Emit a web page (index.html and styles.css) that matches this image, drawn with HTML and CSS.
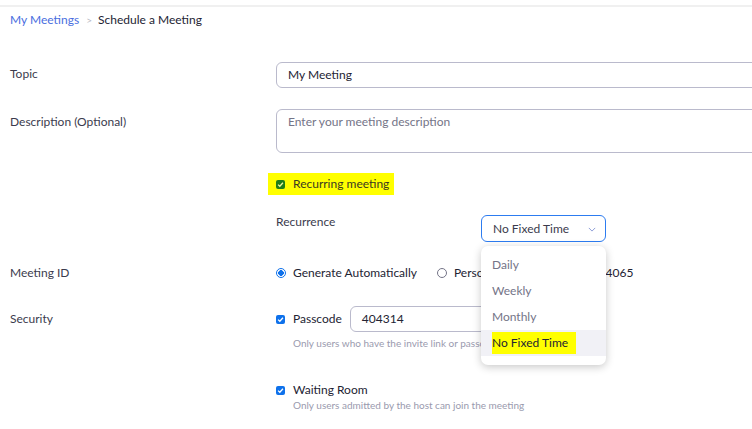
FILE: index.html
```html
<!DOCTYPE html>
<html lang="en">
<head>
    <meta charset="UTF-8">
    <meta name="viewport" content="width=device-width, initial-scale=1.0">
    <title>Schedule a Meeting</title>
    <link rel="stylesheet" href="styles.css">
</head>
<body>
    <div class="topline"></div>
    <div class="breadcrumb">
        <a href="#">My Meetings</a>
        <span class="sep">&gt;</span>
        <span>Schedule a Meeting</span>
    </div>

    <div class="form">
        <div class="row row-topic">
            <div class="label">Topic</div>
            <div class="field">
                <div class="input input-wide">My Meeting</div>
            </div>
        </div>

        <div class="row row-desc">
            <div class="label">Description (Optional)</div>
            <div class="field">
                <div class="input textarea placeholder">Enter your meeting description</div>
            </div>
        </div>

        <div class="row row-recurring">
            <div class="label"></div>
            <div class="field">
                <span class="highlight">
                    <span class="check check-marked">
                        <svg viewBox="0 0 10 10" width="7" height="7"><path d="M1.5 5.2 L4 7.5 L8.5 2.5" fill="none" stroke="#f4f7a0" stroke-width="1.8"/></svg>
                    </span>
                    Recurring meeting
                </span>
            </div>
        </div>

        <div class="row row-recurrence">
            <div class="label"></div>
            <div class="field recurrence">
                <span class="sub-label">Recurrence</span>
                <div class="select-wrap">
                    <div class="select">
                        <span>No Fixed Time</span>
                        <svg class="chevron" viewBox="0 0 10 6" width="8" height="5"><path d="M1 1 L5 5 L9 1" fill="none" stroke="#8a9bd6" stroke-width="1.2"/></svg>
                    </div>
                    <ul class="menu">
                        <li>Daily</li>
                        <li>Weekly</li>
                        <li>Monthly</li>
                        <li class="active"><span class="mark">No Fixed Time</span></li>
                    </ul>
                </div>
            </div>
        </div>

        <div class="row row-id">
            <div class="label">Meeting ID</div>
            <div class="field options">
                <span class="option"><span class="radio radio-on"></span>Generate Automatically</span>
                <span class="option"><span class="radio"></span>Personal Meeting ID 832 24 4065</span>
            </div>
        </div>

        <div class="row row-security">
            <div class="label">Security</div>
            <div class="field">
                <div class="passcode">
                    <span class="check">
                        <svg viewBox="0 0 10 10" width="7" height="7"><path d="M1.5 5.2 L4 7.5 L8.5 2.5" fill="none" stroke="#fff" stroke-width="1.8"/></svg>
                    </span>
                    <span class="opt-text">Passcode</span>
                    <div class="input input-code">404314</div>
                </div>
                <div class="hint">Only users who have the invite link or passcode can join the meeting</div>

                <div class="waiting">
                    <span class="check">
                        <svg viewBox="0 0 10 10" width="7" height="7"><path d="M1.5 5.2 L4 7.5 L8.5 2.5" fill="none" stroke="#fff" stroke-width="1.8"/></svg>
                    </span>
                    <span class="opt-text">Waiting Room</span>
                </div>
                <div class="hint hint-wait">Only users admitted by the host can join the meeting</div>
            </div>
        </div>
    </div>
</body>
</html>
```

FILE: styles.css
```css
body {
    font-family: Lato, "Open Sans", sans-serif;
    font-size: 12px;
    color: #232333;
    margin: 0;
    padding: 0;
    background-color: #fff;
    overflow: hidden;
}
.topline {
    height: 5px;
    border-bottom: 2px solid #f0f0f0;
}
.breadcrumb {
    padding: 3px 10px 0;
    line-height: 20px;
}
.breadcrumb a {
    color: #4a6ee0;
    text-decoration: none;
}
.breadcrumb .sep {
    color: #b8b8c4;
    font-size: 10px;
    margin: 0 3px 0 4px;
}
.form {
    padding-left: 10px;
}
.row {
    display: grid;
    grid-template-columns: 266px 1fr;
}
.label {
    color: #3b3b4d;
    line-height: 18px;
}
.input {
    box-sizing: border-box;
    height: 26px;
    line-height: 24px;
    border: 1px solid #babacc;
    border-radius: 6px;
    padding: 0 11px;
}
.input-wide {
    width: 520px;
}
.row-topic {
    margin-top: 32px;
}
.row-topic .label {
    line-height: 24px;
}
.row-desc {
    margin-top: 21px;
}
.row-desc .label {
    padding-top: 4px;
}
.textarea {
    width: 520px;
    height: 44px;
    line-height: 18px;
    padding-top: 3px;
}
.placeholder {
    color: #747487;
}
.row-recurring {
    margin-top: 20px;
}
.highlight {
    display: inline-flex;
    align-items: center;
    background: #ffff00;
    margin-left: -8px;
    padding: 2px 5px 2px 8px;
    line-height: 18px;
    color: #3a3a20;
}
.check {
    display: inline-flex;
    align-items: center;
    justify-content: center;
    width: 9px;
    height: 9px;
    border-radius: 2px;
    background: #0e71eb;
    margin-right: 8px;
}
.check-marked {
    background: #1f7d1a;
}
.row-recurrence {
    margin-top: 18px;
}
.recurrence {
    display: flex;
}
.sub-label {
    width: 205px;
    line-height: 18px;
    color: #3b3b4d;
}
.select-wrap {
    position: relative;
    margin-top: 2px;
}
.select {
    box-sizing: border-box;
    width: 125px;
    height: 27px;
    border: 1px solid #2d7cf0;
    border-radius: 6px;
    padding: 0 11px;
    display: flex;
    align-items: center;
    justify-content: space-between;
    color: #3b3b4d;
}
.chevron {
    margin-top: 2px;
    margin-right: -2px;
}
.menu {
    position: absolute;
    top: 31px;
    left: 0;
    width: 125px;
    box-sizing: border-box;
    list-style: none;
    margin: 0;
    padding: 6px 0 9px;
    background: #fff;
    border-radius: 7px;
    box-shadow: 0 2px 8px rgba(0, 0, 0, 0.22);
    z-index: 5;
}
.menu li {
    height: 26px;
    line-height: 26px;
    padding-left: 11px;
    color: #747487;
}
.menu li.active {
    background: #f1f1f6;
    color: #232333;
    padding-left: 11px;
}
.menu .mark {
    background: #ffff00;
    display: inline-block;
    line-height: 22px;
    padding-right: 8px;
}
.row-id {
    margin-top: 22px;
}
.options {
    display: flex;
    align-items: center;
    line-height: 18px;
}
.option {
    display: inline-flex;
    align-items: center;
    margin-right: 20px;
}
.radio {
    box-sizing: border-box;
    width: 10px;
    height: 10px;
    border-radius: 50%;
    border: 1px solid #747487;
    margin-right: 7px;
}
.radio-on {
    border-color: #0e71eb;
    background: radial-gradient(circle, #0e71eb 0 2.6px, #fff 3px);
}
.row-security {
    margin-top: 24px;
}
.row-security .label {
    line-height: 26px;
}
.passcode {
    display: flex;
    align-items: center;
}
.opt-text {
    line-height: 18px;
}
.input-code {
    margin-left: 8px;
    width: 150px;
}
.hint {
    font-size: 10px;
    color: #9a9aae;
    line-height: 16px;
    margin-top: 3px;
    padding-left: 17px;
}
.waiting {
    display: flex;
    align-items: center;
    margin-top: 30px;
}
.hint-wait {
    margin-top: 0;
    line-height: 13px;
}
```
